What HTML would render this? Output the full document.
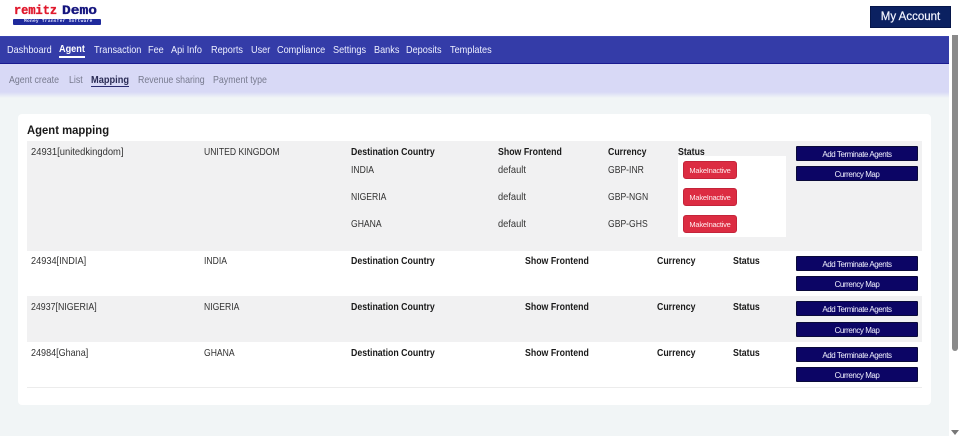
<!DOCTYPE html>
<html><head><meta charset="utf-8"><style>
html,body{margin:0;padding:0;width:960px;height:436px;overflow:hidden;background:#fff;font-family:"Liberation Sans",sans-serif}
div,span{position:absolute;box-sizing:border-box}
span{white-space:nowrap;line-height:14px;transform-origin:0 0}
.n{color:#eef0ff;font-size:10.5px;top:43px;transform:scaleX(.87)}
.s{color:#777a8e;font-size:10.5px;top:73px;transform:scaleX(.84)}
.t{color:#333;font-size:10.5px;transform:scaleX(.82);margin-top:-1px}
.l{transform:scaleX(.885)}
.b{color:#1a1a1a;font-size:10.5px;font-weight:bold;transform:scaleX(.835);margin-top:-1px}
.btn{left:796px;width:122px;height:15px;background:#0c0565;border:1px solid #0a0a3a;border-radius:1px;color:#f2f2ff;font-size:8px;text-align:center;line-height:15px;letter-spacing:-.45px}
.red{left:683px;width:54px;height:18px;background:#dc2c42;border:1px solid #c4243a;border-radius:3px;color:#ffecee;font-size:7.5px;text-align:center;line-height:17px;letter-spacing:-.25px}
.row{left:27px;width:895px}
</style></head><body>
<span style="left:14px;top:4px;font:bold 13px/14px 'Liberation Mono',monospace;color:#e0182c;transform:scaleX(.92);-webkit-text-stroke:.35px #e0182c">remitz</span>
<span style="left:62px;top:4px;font:bold 13px/14px 'Liberation Mono',monospace;color:#14147e;transform:scaleX(1.12);-webkit-text-stroke:.35px #14147e">Demo</span>
<div style="left:13px;top:19px;width:88px;height:6px;background:#1f2a9c;border-radius:1px"></div>
<span style="left:24px;top:19px;font:bold 4.5px/6px 'Liberation Mono',monospace;color:#dfe3ff;letter-spacing:.28px">Money Transfer Software</span>
<div style="left:870px;top:6px;width:81px;height:22px;background:#0b2161;border:1px solid #06164a;color:#f2f4ff;font-size:11.5px;text-align:center;line-height:20px;-webkit-text-stroke:.2px #f2f4ff">My Account</div>

<div style="left:0;top:36px;width:949px;height:28px;background:#343ca8;border-bottom:1px solid #1a1a90;border-top:1px solid #3a44b0"></div>
<div style="left:0;top:64px;width:949px;height:372px;background:#f1f5f6"></div>
<div style="left:0;top:64px;width:949px;height:30px;background:#d8d9f6"></div>
<div style="left:0;top:92px;width:949px;height:6px;background:linear-gradient(#d8d9f6,#f1f5f6)"></div>

<span class="n" style="left:7px">Dashboard</span>
<span class="n" style="left:59px;top:42px;font-weight:bold;color:#fff;transform:scaleX(.87)">Agent</span>
<div style="left:59px;top:56px;width:26px;height:2px;background:#fff"></div>
<span class="n" style="left:94px">Transaction</span>
<span class="n" style="left:148px">Fee</span>
<span class="n" style="left:171px">Api Info</span>
<span class="n" style="left:211px">Reports</span>
<span class="n" style="left:251px">User</span>
<span class="n" style="left:277px">Compliance</span>
<span class="n" style="left:333px">Settings</span>
<span class="n" style="left:374px">Banks</span>
<span class="n" style="left:406px">Deposits</span>
<span class="n" style="left:450px">Templates</span>

<span class="s" style="left:9px">Agent create</span>
<span class="s" style="left:69px">List</span>
<span class="s" style="left:91px;font-weight:bold;color:#2a2c55;transform:scaleX(.88)">Mapping</span>
<div style="left:91px;top:86px;width:38px;height:1px;background:#2a2c70"></div>
<span class="s" style="left:138px">Revenue sharing</span>
<span class="s" style="left:213px">Payment type</span>

<div style="left:18px;top:114px;width:913px;height:291px;background:#fff;border-radius:4px"></div>
<span style="left:27px;top:123px;font-size:12px;font-weight:bold;color:#1a1a1a;transform:scaleX(.94)">Agent mapping</span>

<div class="row" style="top:141px;height:110px;background:#f1f1f2"></div>
<div class="row" style="top:296px;height:46px;background:#f1f1f2"></div>
<div class="row" style="top:387px;height:1px;background:#ececec"></div>
<div style="left:678px;top:156px;width:108px;height:81px;background:#fff"></div>

<span class="t" style="left:31px;top:146px;transform:scaleX(.895)">24931[unitedkingdom]</span>
<span class="t" style="left:204px;top:146px">UNITED KINGDOM</span>
<span class="b" style="left:351px;top:146px">Destination Country</span>
<span class="b" style="left:498px;top:146px">Show Frontend</span>
<span class="b" style="left:608px;top:146px">Currency</span>
<span class="b" style="left:678px;top:146px">Status</span>
<div class="btn" style="top:146px">Add Terminate Agents</div>
<div class="btn" style="top:166px">Currency Map</div>

<span class="t" style="left:351px;top:164px">INDIA</span>
<span class="t l" style="left:498px;top:164px">default</span>
<span class="t" style="left:608px;top:164px">GBP-INR</span>
<div class="red" style="top:161px">MakeInactive</div>
<span class="t" style="left:351px;top:191px">NIGERIA</span>
<span class="t l" style="left:498px;top:191px">default</span>
<span class="t" style="left:608px;top:191px">GBP-NGN</span>
<div class="red" style="top:188px">MakeInactive</div>
<span class="t" style="left:351px;top:218px">GHANA</span>
<span class="t l" style="left:498px;top:218px">default</span>
<span class="t" style="left:608px;top:218px">GBP-GHS</span>
<div class="red" style="top:215px">MakeInactive</div>

<span class="t" style="left:31px;top:255px;transform:scaleX(.875)">24934[INDIA]</span>
<span class="t" style="left:204px;top:255px">INDIA</span>
<span class="b" style="left:351px;top:255px">Destination Country</span>
<span class="b" style="left:525px;top:255px">Show Frontend</span>
<span class="b" style="left:657px;top:255px">Currency</span>
<span class="b" style="left:733px;top:255px">Status</span>
<div class="btn" style="top:256px">Add Terminate Agents</div>
<div class="btn" style="top:276px">Currency Map</div>

<span class="t" style="left:31px;top:301px;transform:scaleX(.84)">24937[NIGERIA]</span>
<span class="t" style="left:204px;top:301px">NIGERIA</span>
<span class="b" style="left:351px;top:301px">Destination Country</span>
<span class="b" style="left:525px;top:301px">Show Frontend</span>
<span class="b" style="left:657px;top:301px">Currency</span>
<span class="b" style="left:733px;top:301px">Status</span>
<div class="btn" style="top:301px">Add Terminate Agents</div>
<div class="btn" style="top:322px">Currency Map</div>

<span class="t" style="left:31px;top:347px;transform:scaleX(.86)">24984[Ghana]</span>
<span class="t" style="left:204px;top:347px">GHANA</span>
<span class="b" style="left:351px;top:347px">Destination Country</span>
<span class="b" style="left:525px;top:347px">Show Frontend</span>
<span class="b" style="left:657px;top:347px">Currency</span>
<span class="b" style="left:733px;top:347px">Status</span>
<div class="btn" style="top:347px">Add Terminate Agents</div>
<div class="btn" style="top:367px">Currency Map</div>

<div style="left:949px;top:36px;width:11px;height:400px;background:#fff"></div>
<div style="left:952px;top:35px;width:6px;height:316px;background:#8a8a8a;border-radius:0 0 3px 3px"></div>
<svg style="position:absolute;left:950px;top:429px" width="10" height="7"><path d="M1 1H9L5 6Z" fill="#777"/></svg>
</body></html>
